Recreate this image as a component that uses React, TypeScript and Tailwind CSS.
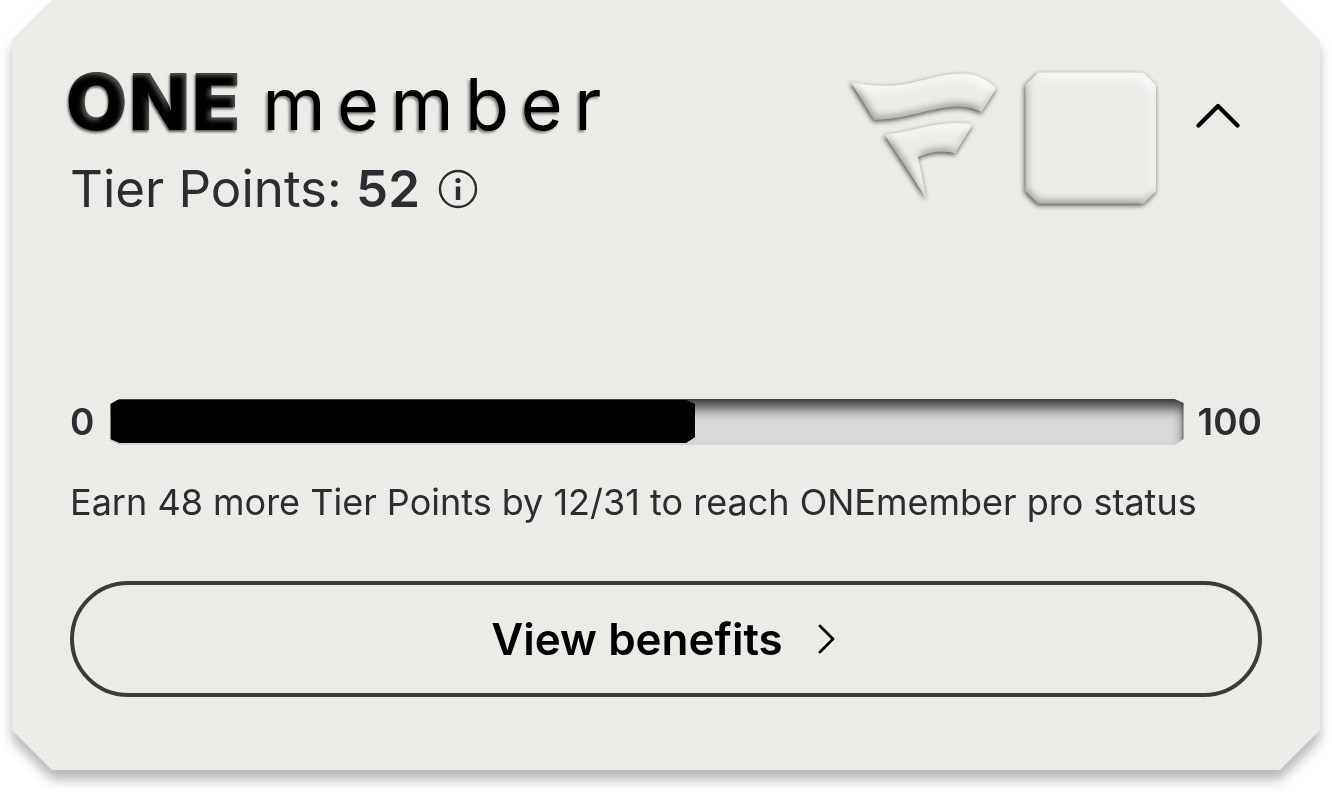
import { useState } from "react";

const TIER = { points: 52, min: 0, max: 100 };

const TIP_ALLOWANCE = 2.5;

function BevelFilters() {
  return (
    <svg width="0" height="0" className="absolute" aria-hidden="true">
      <defs>
        <filter id="bevel-light" x="-15%" y="-15%" width="130%" height="130%" colorInterpolationFilters="sRGB">
          <feGaussianBlur in="SourceAlpha" stdDeviation="2.6" result="soft" />
          <feOffset in="soft" dx="-1.500" dy="2" result="castOffset" />
          <feFlood floodColor="#000" floodOpacity="0.66" />
          <feComposite in2="castOffset" operator="in" result="cast" />
          <feGaussianBlur in="SourceAlpha" stdDeviation="5" result="wide" />
          <feOffset in="wide" dx="-4" dy="5" result="lit" />
          <feFlood floodColor="#fff" floodOpacity="0.8" />
          <feComposite in2="lit" operator="out" />
          <feComposite in2="SourceAlpha" operator="in" result="highlight" />
          <feGaussianBlur in="SourceAlpha" stdDeviation="3.5" result="mid" />
          <feOffset in="mid" dx="1" dy="-3" result="shaded" />
          <feFlood floodColor="#000" floodOpacity="0.36" />
          <feComposite in2="shaded" operator="out" />
          <feComposite in2="SourceAlpha" operator="in" result="shade" />
          <feMerge>
            <feMergeNode in="cast" />
            <feMergeNode in="SourceGraphic" />
            <feMergeNode in="shade" />
            <feMergeNode in="highlight" />
          </feMerge>
        </filter>
        <filter id="bevel-dark" x="-10%" y="-10%" width="120%" height="120%" colorInterpolationFilters="sRGB">
          <feGaussianBlur in="SourceAlpha" stdDeviation="1.3" result="soft" />
          <feOffset in="soft" dx="-1" dy="2" result="castOffset" />
          <feFlood floodColor="#000" floodOpacity="0.6" />
          <feComposite in2="castOffset" operator="in" result="cast" />
          <feGaussianBlur in="SourceAlpha" stdDeviation="2" result="wide" />
          <feOffset in="wide" dx="-3" dy="3" result="lit" />
          <feFlood floodColor="#fff" floodOpacity="0.32" />
          <feComposite in2="lit" operator="out" />
          <feComposite in2="SourceAlpha" operator="in" result="highlight" />
          <feMerge>
            <feMergeNode in="cast" />
            <feMergeNode in="SourceGraphic" />
            <feMergeNode in="highlight" />
          </feMerge>
        </filter>
      </defs>
    </svg>
  );
}

function WingLogo() {
  return (
    <svg width="148" height="136" viewBox="850 70 148 136" className="overflow-visible" aria-hidden="true">
      <g filter="url(#bevel-light)" fill="#ecebe8">
        <path d="M850.5 81.5C864 85 878 86.500 893 85.500C920 83.500 938 73.500 962 73.500C976 73.500 986 79 996.500 88L981.500 112C974 108 966 106.500 956 106.500C930 107.500 900 121 874 119.500Z" />
        <path d="M884.500 134.500C913 132.500 936 119 973 124L955 153.500C946 150.500 933 150.500 918 157L926.500 198.500Z" />
      </g>
    </svg>
  );
}

function BadgePlate() {
  return (
    <svg width="132" height="136" viewBox="0 0 132 136" className="overflow-visible" aria-hidden="true">
      <path
        filter="url(#bevel-light)"
        fill="#ecebe8"
        d="M14 2.500H119.500L132 15V121L119.500 133.500H14L1.500 121V15Z"
      />
    </svg>
  );
}

function InfoIcon() {
  return (
    <svg width="40" height="40" viewBox="0 0 40 40" fill="none" aria-hidden="true">
      <circle cx="20" cy="20" r="18" stroke="#2b2e30" strokeWidth="2.400" />
      <circle cx="20" cy="11.500" r="2.600" fill="#2b2e30" />
      <path d="M20 17.500V31" stroke="#2b2e30" strokeWidth="4.400" />
    </svg>
  );
}

export default function App() {
  const [open, setOpen] = useState(true);
  const span = TIER.max - TIER.min;
  const reached = Math.min(100, ((TIER.points - TIER.min) / span) * 100 + TIP_ALLOWANCE);

  return (
    <main className="overflow-hidden bg-white pb-6 font-['Inter',sans-serif] text-[#2b2e30]">
      <BevelFilters />
      <div className="mx-3 drop-shadow-[0_10px_6px_rgba(0,0,0,0.27)]">
        <section className="bg-[#ecebe7] px-[58px] pt-[61px] pb-[73px] [clip-path:polygon(40px_0,calc(100%-40px)_0,100%_40px,100%_calc(100%-40px),calc(100%-40px)_100%,40px_100%,0_calc(100%-40px),0_40px)]">
          <header className="flex items-start justify-between">
            <div>
              <h1 className="-ml-1 flex items-baseline gap-5 text-black leading-[80px]">
                <span className="text-[79px] font-black tracking-wide [filter:url(#bevel-dark)]">ONE</span>
                <span className="text-[72px] tracking-[0.16em] drop-shadow-[-2px_2px_1px_rgba(0,0,0,0.45)]">member</span>
              </h1>
              <p className="mt-[13px] flex items-center text-[51px] leading-16">
                <span>
                  Tier Points: <strong className="font-semibold">{TIER.points}</strong>
                </span>
                <button type="button" aria-label="About Tier Points" className="ml-[18px]">
                  <InfoIcon />
                </button>
              </p>
            </div>
            <div className="flex items-start pt-[9px] pr-3">
              <WingLogo />
              <div className="ml-[26px]">
                <BadgePlate />
              </div>
              <button
                type="button"
                aria-label={open ? "Collapse" : "Expand"}
                aria-expanded={open}
                onClick={() => setOpen(!open)}
                className="mt-[13px] ml-[30px] flex size-16 items-center justify-center"
              >
                <svg width="44" height="26" viewBox="0 0 44 26" fill="none" className={open ? "" : "rotate-180"} aria-hidden="true">
                  <path d="M2.500 23.500L22 4L41.500 23.500" stroke="#000" strokeWidth="4.200" strokeLinecap="round" strokeLinejoin="round" />
                </svg>
              </button>
            </div>
          </header>

          {open && (
            <>
              <div className="mt-[178px] flex items-center text-[37px] leading-[46px] font-semibold">
                <span>{TIER.min}</span>
                <div
                  role="progressbar"
                  aria-label="Tier Points"
                  aria-valuemin={TIER.min}
                  aria-valuemax={TIER.max}
                  aria-valuenow={TIER.points}
                  className="mr-[14px] ml-4 h-[46px] flex-1 bg-[#d9d9d9] pt-px pb-[2px] shadow-[inset_0_10px_12px_rgba(0,0,0,0.68),inset_-2px_2px_2px_rgba(0,0,0,0.2)] [clip-path:polygon(9px_0,calc(100%-9px)_0,100%_4px,100%_calc(100%-6px),calc(100%-9px)_100%,9px_100%,0_calc(100%-5px),0_5px)]"
                >
                  <div
                    className="h-full bg-black [clip-path:polygon(0_0,calc(100%-9px)_0,100%_4px,100%_calc(100%-6px),calc(100%-9px)_100%,9px_100%,0_calc(100%-4px))]"
                    style={{ width: `${reached}%` }}
                  />
                </div>
                <span>{TIER.max}</span>
              </div>
              <p className="mt-8 text-[36px] leading-[50px]">
                Earn {TIER.max - TIER.points} more Tier Points by 12/31 to reach ONEmember pro status
              </p>
            </>
          )}

          <button
            type="button"
            className="mt-[54px] flex h-[116px] w-full items-center justify-center gap-[34px] rounded-full border-4 border-[#3d3b38] pr-1 text-[44px] font-semibold text-black"
          >
            View benefits
            <svg width="20" height="32" viewBox="0 0 20 32" fill="none" aria-hidden="true">
              <path d="M3 3L16 16L3 29" stroke="#000" strokeWidth="2.800" strokeLinecap="round" strokeLinejoin="round" />
            </svg>
          </button>
        </section>
      </div>
    </main>
  );
}
